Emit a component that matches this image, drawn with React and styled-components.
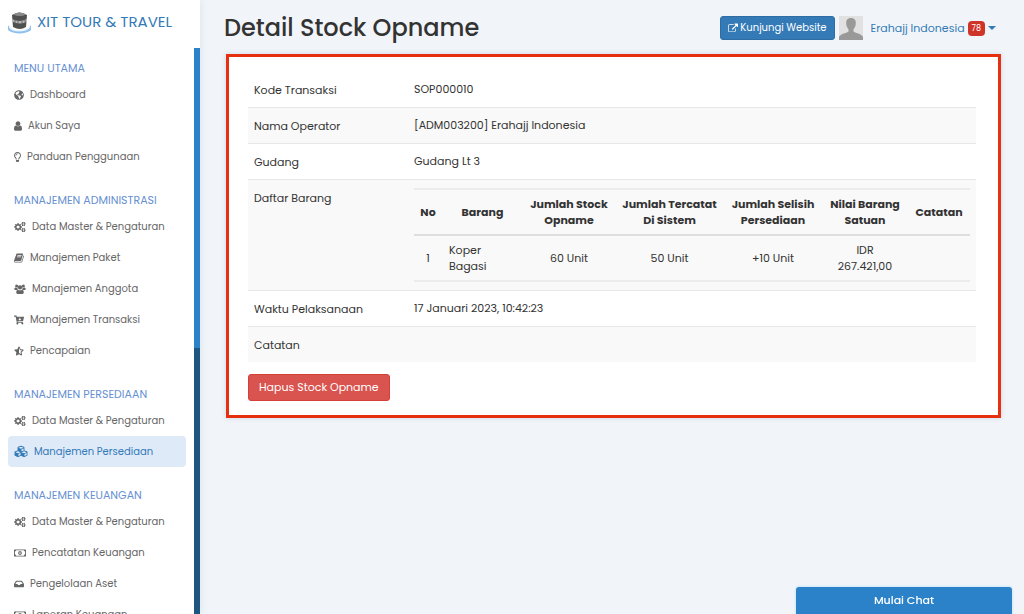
import React from 'react'
import styled, { createGlobalStyle } from 'styled-components';
import { FaGlobeAmericas, FaRegLightbulb, FaCartArrowDown, FaCubes, FaRegMoneyBillAlt, FaInbox } from 'react-icons/fa';
import { FaStarHalfStroke } from 'react-icons/fa6';

const GlobalStyle = createGlobalStyle`
  * {
    box-sizing: border-box;
  }
  body {
    margin: 0;
    background: #f1f5f9;
    color: #333;
    font-family: Poppins, Inter, sans-serif;
    font-size: 11px;
    line-height: 16px;
  }
  a {
    text-decoration: none;
  }
  button {
    font-family: inherit;
    cursor: pointer;
  }
`;

const Page = styled.div`
  display: flex;
  min-height: 100vh;
`;

const Sidebar = styled.aside`
  position: sticky;
  top: 0;
  flex: 0 0 200px;
  height: 100vh;
  display: flex;
  flex-direction: column;
  overflow: hidden;
  background: #fff;
  box-shadow: 0 0 8px rgba(60, 90, 140, 0.12);
`;

const Brand = styled.a`
  flex: 0 0 48px;
  display: flex;
  align-items: center;
  gap: 6px;
  padding: 0 8px 4px;
  color: #337ab7;
  font-size: 15px;
  line-height: 24px;
  white-space: nowrap;
`;

const SidebarBody = styled.div`
  flex: 1;
  min-height: 0;
  display: flex;
`;

const Menu = styled.nav`
  flex: 1;
  display: flex;
  flex-direction: column;
  gap: 18px;
  padding: 10px 8px 0;
  overflow: hidden;
`;

const MenuTitle = styled.h2`
  margin: 0;
  padding-left: 6px;
  color: #6790d2;
  font-size: 11px;
  font-weight: 400;
  line-height: 21px;
  white-space: nowrap;
`;

const MenuLink = styled.a`
  display: flex;
  align-items: center;
  gap: 6px;
  height: 31px;
  padding: 0 6px;
  border-radius: 4px;
  color: ${({ $active }) => ($active ? '#337ab7' : '#666')};
  background: ${({ $active }) => ($active ? '#dfeaf8' : 'transparent')};
  font-size: 10px;
  white-space: nowrap;
`;

const MenuIcon = styled.span`
  flex: none;
  display: flex;
  width: ${({ $width }) => $width}px;

  svg {
    width: 100%;
    height: ${({ $height }) => $height || 10}px;
  }
`;

const Scrollbar = styled.div`
  flex: 0 0 6px;
  background: #1d567f;
`;

const Thumb = styled.div`
  height: 53%;
  background: #2b82c9;
`;

const Main = styled.main`
  flex: 1;
  min-width: 0;
  padding: 14px 23px 60px 24px;
`;

const Header = styled.header`
  display: flex;
  align-items: center;
  justify-content: space-between;
  height: 28px;
  margin-bottom: 12px;
  padding-right: 5px;
`;

const Title = styled.h1`
  margin: 0;
  font-size: 24px;
  font-weight: 500;
  line-height: 32px;
`;

const Account = styled.div`
  display: flex;
  align-items: center;
  gap: 4px;
`;

const VisitLink = styled.a`
  display: flex;
  align-items: center;
  gap: 2px;
  height: 24px;
  padding: 0 7px;
  border: 1px solid #2e6da4;
  border-radius: 3px;
  background: #337ab7;
  color: #fff;
  font-size: 10px;
  white-space: nowrap;
`;

const UserButton = styled.button`
  display: flex;
  align-items: center;
  gap: 3px;
  padding: 0 0 0 4px;
  border: 0;
  background: none;
  color: #337ab7;
  font-size: 11px;
  white-space: nowrap;
`;

const Badge = styled.span`
  padding: 0 4px;
  border-radius: 4px;
  background: #cf3429;
  color: #fff;
  font-size: 8px;
  line-height: 15px;
`;

const Caret = styled.span`
  border-top: 4px solid;
  border-left: 4px solid transparent;
  border-right: 4px solid transparent;
`;

const Card = styled.section`
  margin-left: 2px;
  padding: 14px 22px 14px 19px;
  border: 3px solid #e6300f;
  background: #fff;
  box-shadow: 0 0 5px rgba(60, 90, 140, 0.2);
`;

const DetailTable = styled.table`
  width: 100%;
  margin-bottom: 12px;
  border-spacing: 0;
`;

const DetailRow = styled.tr`
  background: ${({ $striped }) => ($striped ? '#f9f9f9' : '#fff')};

  &:not(:first-child) > * {
    border-top-color: #e8e8e8;
  }
`;

const Label = styled.th`
  width: 160px;
  padding: 10px 6px 9px;
  border-top: 1px solid transparent;
  font-weight: 400;
  text-align: left;
  vertical-align: top;
`;

const Value = styled.td`
  padding: ${({ $nested }) => ($nested ? '8px 6px' : '9px 6px 10px')};
  border-top: 1px solid transparent;
  vertical-align: top;
`;

const ItemTable = styled.table`
  width: 100%;
  table-layout: fixed;
  border-spacing: 0;
  text-align: center;
`;

const ItemHead = styled.th`
  width: ${({ $width }) => $width}px;
  padding: 6px 4px;
  border-top: 2px solid #ececec;
  border-bottom: 2px solid #dedede;
  font-weight: 700;
`;

const ItemCell = styled.td`
  padding: 6px 7px;
  border-bottom: 2px solid #ececec;
  text-align: ${({ $align }) => $align || 'center'};
`;

const DeleteButton = styled.button`
  display: block;
  height: 27px;
  padding: 0 10px;
  border: 1px solid #d43f3a;
  border-radius: 3px;
  background: #d9534f;
  color: #fff;
  font-size: 11px;
`;

const ChatButton = styled.button`
  position: fixed;
  right: 12px;
  bottom: 0;
  width: 216px;
  height: 27px;
  padding: 0;
  border: 0;
  border-radius: 3px 3px 0 0;
  background: #2b82c9;
  box-shadow: 0 0 3px #a9dcf8;
  color: #fff;
  font-size: 11px;
  font-weight: 500;
`;

const UserIcon = () => (
  <svg viewBox="256 128 1280 1536" fill="currentColor">
    <path d="M1536 1399q0 109-62.5 187t-150.5 78h-854q-88 0-150.5-78t-62.5-187q0-85 8.5-160.5t31.5-152 58.5-131 94-89 134.5-34.5q131 128 313 128t313-128q76 0 134.5 34.5t94 89 58.5 131 31.5 152 8.5 160.5zm-256-887q0 159-112.5 271.5t-271.5 112.5-271.5-112.5-112.5-271.5 112.5-271.5 271.5-112.5 271.5 112.5 112.5 271.5z" />
  </svg>
);

const BookIcon = () => (
  <svg viewBox="64 128 1664 1536" fill="currentColor">
    <path d="M1703 478q40 57 18 129l-275 906q-19 64-76.5 107.5t-122.5 43.5h-923q-77 0-148.5-53.5t-99.5-131.5q-24-67-2-127 0-4 3-27t4-37q1-8-3-21.5t-3-19.5q2-11 8-21t16.5-23.5 16.5-23.5q23-38 45-91.5t30-91.5q3-10 .5-30t-.5-28q3-11 17-28t17-23q21-36 42-92t25-90q1-9-2.5-32t.5-28q4-13 22-30.5t22-22.5q19-26 42.5-84.5t27.5-96.5q1-8-3-25.5t-2-26.5q2-8 9-18t18-23 17-21q8-12 16.5-30.5t15-35 16-36 19.5-32 26.5-23.5 36-11.5 47.5 5.5l-1 3q38-9 51-9h761q74 0 114 56t18 130l-274 906q-36 119-71.5 153.5t-128.5 34.5h-869q-27 0-38 15-11 16-1 43 24 70 144 70h923q29 0 56-15.5t35-41.5l300-987q7-22 5-57 38 15 59 43zm-1064 2q-4 13 2 22.5t20 9.5h608q13 0 25.5-9.5t16.5-22.5l21-64q4-13-2-22.5t-20-9.5h-608q-13 0-25.5 9.5t-16.5 22.5zm-83 256q-4 13 2 22.5t20 9.5h608q13 0 25.5-9.5t16.5-22.5l21-64q4-13-2-22.5t-20-9.5h-608q-13 0-25.5 9.5t-16.5 22.5z" />
  </svg>
);

const CogsIcon = () => (
  <svg viewBox="0 64 1920 1664" fill="currentColor">
    <path d="M896 896q0-106-75-181t-181-75-181 75-75 181 75 181 181 75 181-75 75-181zm768 512q0-52-38-90t-90-38-90 38-38 90q0 53 37.5 90.5t90.5 37.5 90.5-37.5 37.5-90.5zm0-1024q0-52-38-90t-90-38-90 38-38 90q0 53 37.5 90.5t90.5 37.5 90.5-37.5 37.5-90.5zm-384 421v185q0 10-7 19.5t-16 10.5l-155 24q-11 35-32 76 34 48 90 115 7 11 7 20 0 12-7 19-23 30-82.5 89.5t-78.5 59.5q-11 0-21-7l-115-90q-37 19-77 31-11 108-23 155-7 24-30 24h-186q-11 0-20-7.5t-10-17.5l-23-153q-34-10-75-31l-118 89q-7 7-20 7-11 0-21-8-144-133-144-160 0-9 7-19 10-14 41-53t47-61q-23-44-35-82l-152-24q-10-1-17-9.5t-7-19.5v-185q0-10 7-19.5t16-10.5l155-24q11-35 32-76-34-48-90-115-7-11-7-20 0-12 7-20 22-30 82-89t79-59q11 0 21 7l115 90q34-18 77-32 11-108 23-154 7-24 30-24h186q11 0 20 7.5t10 17.5l23 153q34 10 75 31l118-89q8-7 20-7 11 0 21 8 144 133 144 160 0 8-7 19-12 16-42 54t-45 60q23 48 34 82l152 23q10 2 17 10.500t7 19.500zm640 533v140q0 16-149 31-12 27-30 52 51 113 51 138 0 4-4 7-122 71-124 71-8 0-46-47t-52-68q-20 2-30 2t-30-2q-14 21-52 68t-46 47q-2 0-124-71-4-3-4-7 0-25 51-138-18-25-30-52-149-15-149-31v-140q0-16 149-31 13-29 30-52-51-113-51-138 0-4 4-7 4-2 35-20t59-34 30-16q8 0 46 46.5t52 67.500q20-2 30-2t30 2q51-71 92-112l6-2q4 0 124 70 4 3 4 7 0 25-51 138 17 23 30 52 149 15 149 31zm0-1024v140q0 16-149 31-12 27-30 52 51 113 51 138 0 4-4 7-122 71-124 71-8 0-46-47t-52-68q-20 2-30 2t-30-2q-14 21-52 68t-46 47q-2 0-124-71-4-3-4-7 0-25 51-138-18-25-30-52-149-15-149-31v-140q0-16 149-31 13-29 30-52-51-113-51-138 0-4 4-7 4-2 35-20t59-34 30-16q8 0 46 46.500t52 67.500q20-2 30-2t30 2q51-71 92-112l6-2q4 0 124 70 4 3 4 7 0 25-51 138 17 23 30 52 149 15 149 31z" />
  </svg>
);

const UsersIcon = () => (
  <svg viewBox="0 0 24 21" fill="currentColor">
    <circle cx="5" cy="4" r="3.200" />
    <circle cx="19" cy="4" r="3.200" />
    <circle cx="12" cy="7" r="4.600" />
    <path d="M2 7.500q3 1.500 4.500.5 0 2.500 1.500 4.500H2q-2 0-2-2 0-2.500 2-3zM22 7.500q-3 1.500-4.500.5 0 2.500-1.500 4.500h6q2 0 2-2 0-2.500-2-3zM7.500 12q4.500 2.500 9 0 3.500.5 3.500 5.500 0 3.500-3 3.500H7q-3 0-3-3.500 0-5 3.500-5.500z" />
  </svg>
);

const ExternalIcon = () => (
  <svg width="10" height="10" viewBox="0 0 1792 1600" fill="currentColor">
    <path d="M1408 928v320q0 119-84.5 203.5t-203.5 84.5h-832q-119 0-203.5-84.5t-84.5-203.5v-832q0-119 84.5-203.5t203.5-84.5h704q14 0 23 9t9 23v64q0 14-9 23t-23 9h-704q-66 0-113 47t-47 113v832q0 66 47 113t113 47h832q66 0 113-47t47-113v-320q0-14 9-23t23-9h64q14 0 23 9t9 23zm384-864v512q0 26-19 45t-45 19-45-19l-176-176-652 652q-10 10-23 10t-23-10l-114-114q-10-10-10-23t10-23l652-652-176-176q-19-19-19-45t19-45 45-19h512q26 0 45 19t19 45z" />
  </svg>
);

const Logo = () => (
  <svg width="23" height="23" viewBox="0 0 23 23">
    <path d="M0 14c2 3 3 4 3 4q9 4 17 0l3-4v5c-5 4.500-18 4.500-23 0z" fill="#8fc1ee" />
    <path d="M1 15q2 4 10 4t11-4v1.500q-3 4-11 4t-10-4z" fill="#e9f3fc" />
    <path d="M4 4q7.500-5 15 0l-1 12q-6 4-13 0z" fill="#505050" />
    <path d="M5 3.500q6.500-4 13 0-6 3-13 0z" fill="#8a8a8a" />
    <path d="M4 8q7 4 15 0v2.500q-7 4-14.500 0z" fill="#b9b9b9" />
    <path d="M7 9v2.500M10 10v2.500M14 10v2.500M17 9v2" stroke="#666" strokeWidth="1" />
  </svg>
);

const Avatar = () => (
  <svg width="24" height="24" viewBox="0 0 24 24" role="img" aria-label="Foto profil">
    <path d="M0 0h24v24H0z" fill="#e1e1e1" />
    <path d="M12 2c3.500 0 5 2.300 4.800 5.500-.1 3-1.300 4.500-2.300 5.800v2.200c1 1.500 8 2 9.500 5.500v3H0v-3c1.500-3.500 8.500-4 9.500-5.500v-2.200C8.500 12 7.300 10.500 7.200 7.500 7 4.300 8.500 2 12 2z" fill="#999" />
  </svg>
);

const menu = [
  {
    title: 'MENU UTAMA',
    items: [
      { text: 'Dashboard', icon: FaGlobeAmericas, width: 10 },
      { text: 'Akun Saya', icon: UserIcon, width: 8 },
      { text: 'Panduan Penggunaan', icon: FaRegLightbulb, width: 7 },
    ],
  },
  {
    title: 'MANAJEMEN ADMINISTRASI',
    items: [
      { text: 'Data Master & Pengaturan', icon: CogsIcon, width: 12 },
      { text: 'Manajemen Paket', icon: BookIcon, width: 10 },
      { text: 'Manajemen Anggota', icon: UsersIcon, width: 12 },
      { text: 'Manajemen Transaksi', icon: FaCartArrowDown, width: 10 },
      { text: 'Pencapaian', icon: FaStarHalfStroke, width: 10 },
    ],
  },
  {
    title: 'MANAJEMEN PERSEDIAAN',
    items: [
      { text: 'Data Master & Pengaturan', icon: CogsIcon, width: 12 },
      { text: 'Manajemen Persediaan', icon: FaCubes, width: 14, height: 13, active: true },
    ],
  },
  {
    title: 'MANAJEMEN KEUANGAN',
    items: [
      { text: 'Data Master & Pengaturan', icon: CogsIcon, width: 12 },
      { text: 'Pencatatan Keuangan', icon: FaRegMoneyBillAlt, width: 12 },
      { text: 'Pengelolaan Aset', icon: FaInbox, width: 10 },
      { text: 'Laporan Keuangan', icon: FaRegMoneyBillAlt, width: 12 },
    ],
  },
];

const columns = [
  { text: 'No', width: 28 },
  { text: 'Barang', width: 81 },
  { text: 'Jumlah Stock Opname', width: 92 },
  { text: 'Jumlah Tercatat Di Sistem', width: 109 },
  { text: 'Jumlah Selisih Persediaan', width: 98 },
  { text: 'Nilai Barang Satuan', width: 86 },
  { text: 'Catatan', width: 62 },
];

const Items = () => (
  <ItemTable>
    <thead>
      <tr>
        {columns.map((col) => (
          <ItemHead key={col.text} scope="col" $width={col.width}>{col.text}</ItemHead>
        ))}
      </tr>
    </thead>
    <tbody>
      <tr>
        <ItemCell>1</ItemCell>
        <ItemCell $align="left">Koper<br />Bagasi</ItemCell>
        <ItemCell>60 Unit</ItemCell>
        <ItemCell>50 Unit</ItemCell>
        <ItemCell>+10 Unit</ItemCell>
        <ItemCell>IDR<br />267.421,00</ItemCell>
        <ItemCell />
      </tr>
    </tbody>
  </ItemTable>
);

const details = [
  { label: 'Kode Transaksi', value: 'SOP000010' },
  { label: 'Nama Operator', value: '[ADM003200] Erahajj Indonesia' },
  { label: 'Gudang', value: 'Gudang Lt 3' },
  { label: 'Daftar Barang', value: <Items />, nested: true },
  { label: 'Waktu Pelaksanaan', value: '17 Januari 2023, 10:42:23' },
  { label: 'Catatan', value: '' },
];

const App = () => {
  return (
    <Page>
      <GlobalStyle />
      <Sidebar>
        <Brand href="#"><Logo />XIT TOUR &amp; TRAVEL</Brand>
        <SidebarBody>
          <Menu>
            {menu.map((group) => (
              <div key={group.title}>
                <MenuTitle>{group.title}</MenuTitle>
                {group.items.map(({ text, icon: Icon, width, height, active }) => (
                  <MenuLink key={text} href="#" $active={active}>
                    <MenuIcon $width={width} $height={height}><Icon /></MenuIcon>
                    {text}
                  </MenuLink>
                ))}
              </div>
            ))}
          </Menu>
          <Scrollbar><Thumb /></Scrollbar>
        </SidebarBody>
      </Sidebar>
      <Main>
        <Header>
          <Title>Detail Stock Opname</Title>
          <Account>
            <VisitLink href="#"><ExternalIcon />Kunjungi Website</VisitLink>
            <Avatar />
            <UserButton type="button">
              Erahajj Indonesia <Badge>78</Badge><Caret />
            </UserButton>
          </Account>
        </Header>
        <Card>
          <DetailTable>
            <tbody>
              {details.map((row, i) => (
                <DetailRow key={row.label} $striped={i % 2 === 1}>
                  <Label scope="row">{row.label}</Label>
                  <Value $nested={row.nested}>{row.value}</Value>
                </DetailRow>
              ))}
            </tbody>
          </DetailTable>
          <DeleteButton type="button">Hapus Stock Opname</DeleteButton>
        </Card>
      </Main>
      <ChatButton type="button">Mulai Chat</ChatButton>
    </Page>
  )
}

export default App
